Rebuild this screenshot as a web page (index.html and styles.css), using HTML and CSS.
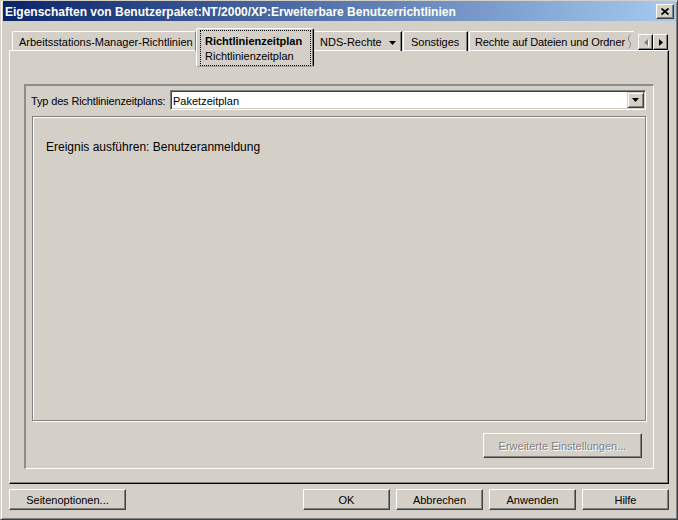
FILE: index.html
```html
<!DOCTYPE html>
<html lang="de">
<head>
    <meta charset="UTF-8">
    <meta name="viewport" content="width=device-width, initial-scale=1.0">
    <title>Eigenschaften von Benutzerpaket</title>
    <link rel="stylesheet" href="styles.css">
</head>
<body>
    <div class="window">
        <div class="titlebar">
            <span class="title">Eigenschaften von Benutzerpaket:NT/2000/XP:Erweiterbare Benutzerrichtlinien</span>
            <button class="close">
                <svg width="8" height="7" viewBox="0 0 8 7"><path d="M0.5 0.5L7.5 6.5M7.5 0.5L0.5 6.5" stroke="#000" stroke-width="1.7"/></svg>
            </button>
        </div>

        <div class="content">
            <div class="tabs">
                <div class="tab first">Arbeitsstations-Manager-Richtlinien</div>
                <div class="tab active">
                    <div class="focus">
                        <b>Richtlinienzeitplan</b>
                        <span>Richtlinienzeitplan</span>
                    </div>
                </div>
                <div class="tab nds">NDS-Rechte
                    <svg width="7" height="4" viewBox="0 0 7 4"><path d="M0 0h7L3.5 4z" fill="#000"/></svg>
                </div>
                <div class="tab other">Sonstiges</div>
                <div class="tab cut"><span>Rechte auf Dateien und Ordner</span>
                    <svg width="5" height="15" viewBox="0 0 5 15"><path d="M3.5 0.5C1 3 1 5.5 2.5 7.5S4 11.5 1.5 14.5" stroke="#808080" fill="none"/></svg>
                </div>
                <div class="scroller">
                    <button class="arrow off"><svg width="4" height="7" viewBox="0 0 4 7"><path d="M4 0v7L0 3.5z" fill="#808080"/></svg></button>
                    <button class="arrow"><svg width="4" height="7" viewBox="0 0 4 7"><path d="M0 0v7l4-3.5z" fill="#000"/></svg></button>
                </div>
            </div>

            <div class="panel">
                <div class="group">
                    <div class="row">
                        <label>Typ des Richtlinienzeitplans:</label>
                        <div class="combo">
                            <span class="value">Paketzeitplan</span>
                            <span class="drop"><svg width="7" height="4" viewBox="0 0 7 4"><path d="M0 0h7L3.5 4z" fill="#000"/></svg></span>
                        </div>
                    </div>
                    <div class="inner">
                        <p>Ereignis ausführen: Benutzeranmeldung</p>
                    </div>
                    <div class="actions">
                        <button class="btn wide" disabled>Erweiterte Einstellungen...</button>
                    </div>
                </div>
            </div>

            <div class="footer">
                <button class="btn options">Seitenoptionen...</button>
                <div class="right">
                    <button class="btn">OK</button>
                    <button class="btn">Abbrechen</button>
                    <button class="btn">Anwenden</button>
                    <button class="btn">Hilfe</button>
                </div>
            </div>
        </div>
    </div>
</body>
</html>
```

FILE: styles.css
```css
* {
    margin: 0;
    padding: 0;
    box-sizing: border-box;
}
body {
    font-family: "Liberation Sans", Arial, sans-serif;
    font-size: 11px;
    color: #000;
    background: #d4d0c8;
}
button {
    font-family: inherit;
    font-size: 11px;
    color: #000;
}
.window {
    width: 678px;
    height: 520px;
    background: #d4d0c8;
    border: 1px solid;
    border-color: #d4d0c8 #404040 #404040 #d4d0c8;
    box-shadow: inset 1px 1px #fff, inset -1px -1px #808080;
    padding: 0 1px 2px 2px;
    display: flex;
    flex-direction: column;
}
.titlebar {
    height: 20px;
    display: flex;
    align-items: center;
    justify-content: space-between;
    padding: 0 2px 0 2px;
    background: linear-gradient(to right, #0a246a, #a6caf0);
}
.title {
    color: #fff;
    font-weight: 700;
    font-size: 12px;
    line-height: 20px;
    padding-top: 2px;
    white-space: nowrap;
}
.close {
    width: 18px;
    height: 15px;
    display: flex;
    align-items: center;
    justify-content: center;
    background: #d4d0c8;
    border: 1px solid;
    border-color: #fff #404040 #404040 #fff;
    box-shadow: inset -1px -1px #808080;
}

.content {
    flex: 1;
    display: flex;
    flex-direction: column;
    padding: 0 3px 0 6px;
}

/* tabs */
.tabs {
    height: 22px;
    margin-top: 7px;
    margin-left: 3px;
    display: flex;
    align-items: flex-start;
    position: relative;
    z-index: 2;
}
.tab {
    height: 20px;
    margin-top: 3px;
    padding: 2px 0 0 6px;
    line-height: 16px;
    white-space: nowrap;
    border-top: 1px solid #fff;
    border-left: 1px solid #fff;
    border-top-left-radius: 2px;
    border-right: 1px solid #808080;
}
.tab.first {
    width: 184px;
}
.tab.active {
    width: 118px;
    height: 39px;
    margin-top: 0;
    padding: 1px 2px 0 3px;
    background: #d4d0c8;
    border-right: 1px solid #000;
    border-bottom: 1px solid #a0a0a0;
    border-radius: 2px;
    box-shadow: inset -1px 0 #808080;
}
.focus {
    height: 36px;
    padding: 3px 0 0 4px;
    border: 1px dotted #000;
    display: flex;
    flex-direction: column;
    line-height: 15px;
}
.tab.nds {
    width: 88px;
    border-left: none;
    border-right: 1px solid #000;
    box-shadow: inset -1px 0 #808080;
    display: flex;
    align-items: flex-start;
}
.tab.nds svg {
    margin: 7px 0 0 7px;
}
.tab.other {
    width: 65px;
    margin-left: 1px;
    padding-left: 7px;
    border-right: 1px solid #000;
    box-shadow: inset -1px 0 #808080;
}
.tab.cut {
    width: 165px;
    margin-left: 1px;
    padding-left: 5px;
    border-right: none;
    display: flex;
    align-items: flex-start;
    overflow: hidden;
}
.tab.cut span {
    letter-spacing: -0.1px;
}
.tab.cut svg {
    flex-shrink: 0;
    margin: 0 0 0 2px;
}
.scroller {
    margin: 6px 0 0 4px;
    display: flex;
}
.arrow {
    width: 15px;
    height: 16px;
    display: flex;
    align-items: center;
    justify-content: center;
    background: #d4d0c8;
    border: 1px solid;
    border-color: #fff #000 #000 #fff;
    box-shadow: inset -1px -1px #808080;
}
.arrow.off svg {
    filter: drop-shadow(1px 1px 0 #fff);
}

/* tab page */
.panel {
    width: 660px;
    height: 434px;
    padding: 33px 14px 0 14px;
    border: 1px solid;
    border-color: #fff #000 #000 #fff;
    box-shadow: inset -1px -1px #808080;
    position: relative;
    z-index: 1;
}
.group {
    height: 385px;
    display: flex;
    flex-direction: column;
    padding: 4px 7px 0 5px;
    border: 1px solid;
    border-width: 2px 1px 1px 2px;
    border-color: #8c8c8c #fff #fff #8c8c8c;
}
.row {
    height: 20px;
    display: flex;
    align-items: center;
}
.row label {
    width: 139px;
    padding-top: 1px;
    letter-spacing: -0.15px;
    white-space: nowrap;
}
.combo {
    flex: 1;
    height: 20px;
    display: flex;
    align-items: center;
    justify-content: space-between;
    background: #fff;
    border: 1px solid;
    border-color: #808080 #fff #fff #808080;
    box-shadow: inset 1px 1px #404040, inset -1px -1px #d4d0c8;
    padding: 1px 1px 1px 2px;
}
.combo .value {
    padding-top: 1px;
}
.drop {
    width: 17px;
    height: 16px;
    display: flex;
    align-items: center;
    justify-content: center;
    background: #d4d0c8;
    border: 1px solid;
    border-color: #d4d0c8 #404040 #404040 #d4d0c8;
    box-shadow: inset 1px 1px #fff, inset -1px -1px #808080;
}
.inner {
    height: 305px;
    margin: 6px 0 0 1px;
    padding: 23px 0 0 13px;
    border: 1px solid #808080;
    box-shadow: inset 1px 1px #fff, 1px 1px #fff;
}
.inner p {
    font-size: 12px;
}
.actions {
    margin-top: 12px;
    display: flex;
    justify-content: flex-end;
    padding-right: 4px;
}

/* buttons */
.btn {
    width: 87px;
    height: 21px;
    background: #d4d0c8;
    border: 1px solid;
    border-color: #fff #404040 #404040 #fff;
    box-shadow: inset -1px -1px #808080;
}
.btn.wide {
    width: 159px;
    height: 25px;
    color: #808080;
    text-shadow: 1px 1px 0 #fff;
}
.btn.options {
    width: 117px;
}
.footer {
    margin-top: 5px;
    display: flex;
    justify-content: space-between;
    width: 660px;
}
.footer .right {
    display: flex;
    gap: 6px;
}
```
